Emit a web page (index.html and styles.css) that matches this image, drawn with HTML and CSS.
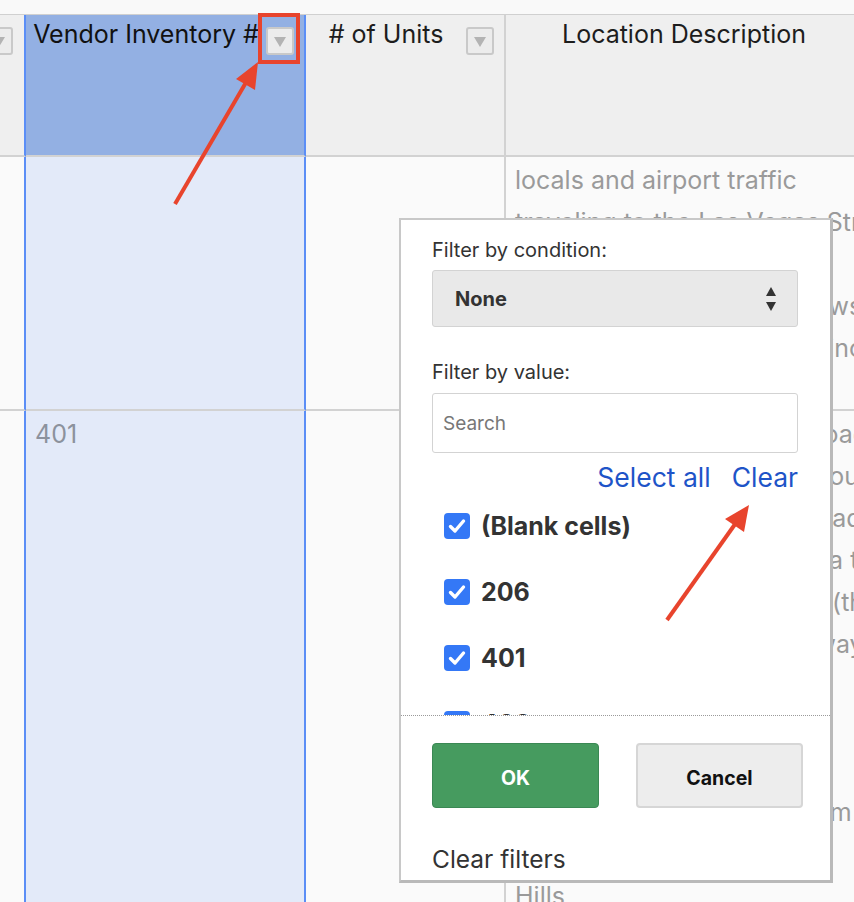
FILE: index.html
```html
<!DOCTYPE html>
<html>
<head>
<meta charset="utf-8">
<title>Filter</title>
<link rel="stylesheet" href="styles.css">
</head>
<body>
<div class="page">
  <div class="topgap"></div>
  <div class="grid">
    <div class="cell head c0">
      <span class="fbtn"><svg width="12" height="10" viewBox="0 0 12 10"><polygon points="0,0 12,0 6,10" fill="#b3b3b3"/></svg></span>
    </div>
    <div class="cell head c1">
      <span class="htext">Vendor Inventory #</span>
      <span class="fbtn"><svg width="12" height="10" viewBox="0 0 12 10"><polygon points="0,0 12,0 6,10" fill="#b3b3b3"/></svg></span>
    </div>
    <div class="cell head c2">
      <span class="htext"># of Units</span>
      <span class="fbtn"><svg width="12" height="10" viewBox="0 0 12 10"><polygon points="0,0 12,0 6,10" fill="#b3b3b3"/></svg></span>
    </div>
    <div class="cell head c3">
      <span class="htext">Location Description</span>
    </div>

    <div class="cell body c0"></div>
    <div class="cell body c1"></div>
    <div class="cell body c2"></div>
    <div class="cell body c3 desc">
      <div>locals and airport traffic</div>
      <div>traveling to the Las Vegas Strip</div>
      <div>with easy access to the</div>
      <div>of the hotels with great views</div>
      <div>and hotels along the strip, including</div>
    </div>

    <div class="cell body last c0"></div>
    <div class="cell body last c1 num">401</div>
    <div class="cell body last c2"></div>
    <div class="cell body last c3 desc">
      <div>Positioned near the main roads</div>
      <div>with steady daily traffic throughout</div>
      <div>for drivers who are now headed</div>
      <div>into the airport and the area to</div>
      <div>going into the south valley (the</div>
      <div>Summerlin), onto the freeway</div>
      <div>serving residents of the</div>
      <div>Henderson, Paradise and</div>
      <div>Spring Valley and the</div>
      <div>communities in the outer rim</div>
      <div>like Anthem and Seven</div>
      <div>Hills</div>
    </div>
  </div>

  <div class="popup">
    <div class="label">Filter by condition:</div>
    <div class="select">
      <span class="select-value">None</span>
      <svg class="updown" width="10" height="24" viewBox="0 0 10 24"><polygon points="0,9 5,0 10,9" fill="#333"/><polygon points="0,15 10,15 5,24" fill="#333"/></svg>
    </div>
    <div class="label label2">Filter by value:</div>
    <input class="search" type="text" placeholder="Search">
    <div class="links">
      <span class="link">Select all</span>
      <span class="link">Clear</span>
    </div>
    <div class="list">
      <div class="item"><span class="cb"><svg width="26" height="26" viewBox="0 0 26 26"><path d="M6.5 13.5 L11 18 L19.5 8" fill="none" stroke="#fff" stroke-width="3.4" stroke-linecap="round" stroke-linejoin="round"/></svg></span><span class="item-text">(Blank cells)</span></div>
      <div class="item"><span class="cb"><svg width="26" height="26" viewBox="0 0 26 26"><path d="M6.5 13.5 L11 18 L19.5 8" fill="none" stroke="#fff" stroke-width="3.4" stroke-linecap="round" stroke-linejoin="round"/></svg></span><span class="item-text">206</span></div>
      <div class="item"><span class="cb"><svg width="26" height="26" viewBox="0 0 26 26"><path d="M6.5 13.5 L11 18 L19.5 8" fill="none" stroke="#fff" stroke-width="3.4" stroke-linecap="round" stroke-linejoin="round"/></svg></span><span class="item-text">401</span></div>
      <div class="item"><span class="cb"><svg width="26" height="26" viewBox="0 0 26 26"><path d="M6.5 13.5 L11 18 L19.5 8" fill="none" stroke="#fff" stroke-width="3.4" stroke-linecap="round" stroke-linejoin="round"/></svg></span><span class="item-text">403</span></div>
    </div>
    <div class="buttons">
      <button class="btn ok">OK</button>
      <button class="btn cancel">Cancel</button>
    </div>
    <div class="clear-filters">Clear filters</div>
  </div>

  <div class="callout-box"></div>
  <svg class="arrows" width="854" height="902" viewBox="0 0 854 902">
    <line x1="175" y1="204" x2="248" y2="79" stroke="#e8442d" stroke-width="4" stroke-linecap="butt"/>
    <polygon points="258,62 236,79 255,90" fill="#e8442d"/>
    <line x1="667" y1="620" x2="738" y2="520" stroke="#e8442d" stroke-width="4" stroke-linecap="butt"/>
    <polygon points="749,505 725,519 744,532" fill="#e8442d"/>
  </svg>
</div>
</body>
</html>
```

FILE: styles.css
```css
* { box-sizing: border-box; }
html, body { margin: 0; padding: 0; }
body {
  width: 854px;
  height: 902px;
  overflow: hidden;
  background: #fafafa;
  font-family: Inter, "Noto Sans", sans-serif;
  color: #222;
}
.page {
  position: relative;
  width: 854px;
  height: 902px;
  overflow: hidden;
}
.topgap {
  height: 14px;
  background: #f9f9f9;
}
.grid {
  display: grid;
  grid-template-columns: 26px 280px 200px 356px;
  grid-template-rows: 142px 254px 520px;
  width: 862px;
  border-top: 1px solid #d0d0d0;
}
.cell {
  border-bottom: 2px solid #d2d2d2;
  overflow: hidden;
  background: #fafafa;
}
.cell.last { border-bottom: none; }
.c0 { border-right: 2px solid #5b8ef6; }
.c1 { border-right: 2px solid #5b8ef6; background: #e3eaf9; }
.c2 { border-right: 2px solid #d2d2d2; }

.head {
  display: flex;
  align-items: flex-start;
  padding-top: 4px;
  background: #efefef;
}
.head.c0 { justify-content: flex-end; padding-right: 11px; }
.head.c1 { background: #93b0e3; padding-right: 10px; }
.head.c2 { padding-right: 10px; }
.htext {
  flex: 1;
  text-align: center;
  font-size: 25px;
  line-height: 30px;
  white-space: nowrap;
  color: #1d1d1d;
}
.head.c1 .htext { color: #111; }
.fbtn {
  flex: none;
  width: 28px;
  height: 28px;
  margin-top: 8px;
  background: #ececec;
  border: 2px solid #c9c9c9;
  border-radius: 3px;
  display: flex;
  align-items: center;
  justify-content: center;
  padding-top: 2px;
}
.fbtn svg { display: block; }

.body {
  padding: 2px 9px;
  font-size: 25px;
  line-height: 42px;
  color: #9a9a9a;
  white-space: nowrap;
}
.num { color: #8c929d; }

.popup {
  position: absolute;
  left: 399px;
  top: 218px;
  width: 434px;
  height: 665px;
  background: #fff;
  border: 2px solid #c8c8c8;
  border-right: 3px solid #b9b9b9;
  border-bottom: 3px solid #b9b9b9;
  padding: 18px 32px 0 31px;
  color: #333;
}
.label {
  font-size: 20px;
  line-height: 24px;
  color: #333;
  margin-bottom: 8px;
}
.label2 {
  margin-top: 33px;
  margin-bottom: 9px;
}
.select {
  height: 57px;
  background: #e9e9e9;
  border: 1px solid #d3d3d3;
  border-radius: 3px;
  display: flex;
  align-items: center;
  justify-content: space-between;
  padding: 0 21px 0 22px;
}
.select-value {
  font-size: 20px;
  font-weight: 700;
  color: #333;
}
.updown { display: block; }
.search {
  display: block;
  width: 100%;
  height: 60px;
  border: 1px solid #d3d3d3;
  border-radius: 3px;
  padding: 0 10px;
  font-family: Inter, "Noto Sans", sans-serif;
  font-size: 19px;
  color: #333;
  background: #fff;
  outline: none;
}
.search::placeholder { color: #777; }
.links {
  margin-top: 9px;
  display: flex;
  justify-content: flex-end;
  gap: 21px;
  height: 31px;
}
.link {
  font-size: 26.5px;
  line-height: 30px;
  color: #1e54c8;
}
.list {
  margin: 0 -32px 0 -31px;
  height: 223px;
  overflow: hidden;
  border-bottom: 1px dotted #9a9a9a;
  padding-left: 43px;
}
.item {
  height: 66px;
  display: flex;
  align-items: center;
  gap: 11px;
}
.cb {
  width: 26px;
  height: 26px;
  border-radius: 4px;
  background: #3478f6;
  display: block;
  flex: none;
}
.cb svg { display: block; }
.item-text {
  font-size: 25px;
  font-weight: 700;
  color: #333;
}
.buttons {
  margin-top: 27px;
  display: grid;
  grid-template-columns: 167px 167px;
  gap: 37px;
  width: 371px;
}
.btn {
  height: 65px;
  border-radius: 4px;
  font-family: Inter, "Noto Sans", sans-serif;
  font-size: 19.5px;
  font-weight: 700;
  padding: 4px 0 0;
}
.ok {
  background: #469b5f;
  border: 1px solid #3b8854;
  color: #fff;
}
.cancel {
  background: #ededed;
  border: 2px solid #d6d6d6;
  color: #111;
}
.clear-filters {
  margin-top: 36px;
  font-size: 24.5px;
  line-height: 30px;
  color: #333;
}

.callout-box {
  position: absolute;
  left: 258px;
  top: 13px;
  width: 42px;
  height: 51px;
  border: 4px solid #e8442d;
}
.arrows {
  position: absolute;
  left: 0;
  top: 0;
  pointer-events: none;
}
```
